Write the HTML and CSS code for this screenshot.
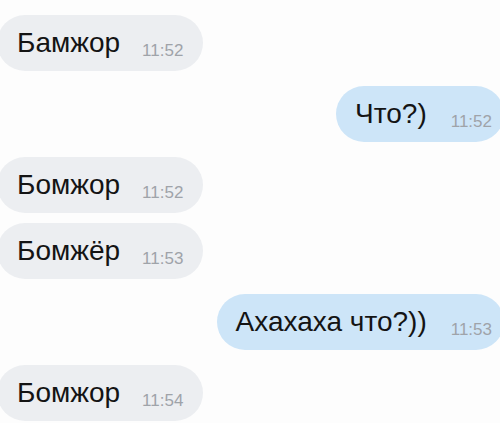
FILE: index.html
```html
<!DOCTYPE html>
<html lang="ru">
<head>
    <meta charset="UTF-8">
    <meta name="viewport" content="width=device-width, initial-scale=1.0">
    <title>Чат</title>
    <link rel="stylesheet" href="styles.css">
</head>
<body>
    <div class="chat">
        <div class="msg msg-in">
            <span class="msg-text">Бамжор</span>
            <span class="msg-time">11:52</span>
        </div>
        <div class="msg msg-out">
            <span class="msg-text">Что?)</span>
            <span class="msg-time">11:52</span>
        </div>
        <div class="msg msg-in">
            <span class="msg-text">Бомжор</span>
            <span class="msg-time">11:52</span>
        </div>
        <div class="msg msg-in msg-next">
            <span class="msg-text">Бомжёр</span>
            <span class="msg-time">11:53</span>
        </div>
        <div class="msg msg-out">
            <span class="msg-text">Ахахаха что?))</span>
            <span class="msg-time">11:53</span>
        </div>
        <div class="msg msg-in">
            <span class="msg-text">Бомжор</span>
            <span class="msg-time">11:54</span>
        </div>
    </div>
</body>
</html>
```

FILE: styles.css
```css
/* ===== Page ===== */
body {
    margin: 0;
    padding: 0;
    background: #fdfdfd;
    font-family: 'Liberation Sans', Arial, sans-serif;
    overflow: hidden;
}

/* ===== Chat column ===== */
.chat {
    display: flex;
    flex-direction: column;
    padding-top: 15px;
    margin: 0 -4px 0 -3px;
}

/* ===== Bubbles ===== */
.msg {
    display: flex;
    align-items: center;
    height: 56px;
    border-radius: 28px;
    margin-top: 15px;
    box-sizing: border-box;
}

.msg:first-child {
    margin-top: 0;
}

.msg-next {
    margin-top: 10px;
}

.msg-in {
    align-self: flex-start;
    background: #eceef1;
    padding: 0 20px 0 20px;
}

.msg-out {
    align-self: flex-end;
    background: #cde5f8;
    padding: 0 12px 0 19px;
}

.msg-text {
    font-size: 28px;
    line-height: 32px;
    color: #141414;
}

.msg-time {
    font-size: 17px;
    line-height: 20px;
    color: #9fa3a9;
    margin-left: 22px;
    margin-top: 16px;
}

.msg-out .msg-time {
    margin-left: 24px;
}
```
